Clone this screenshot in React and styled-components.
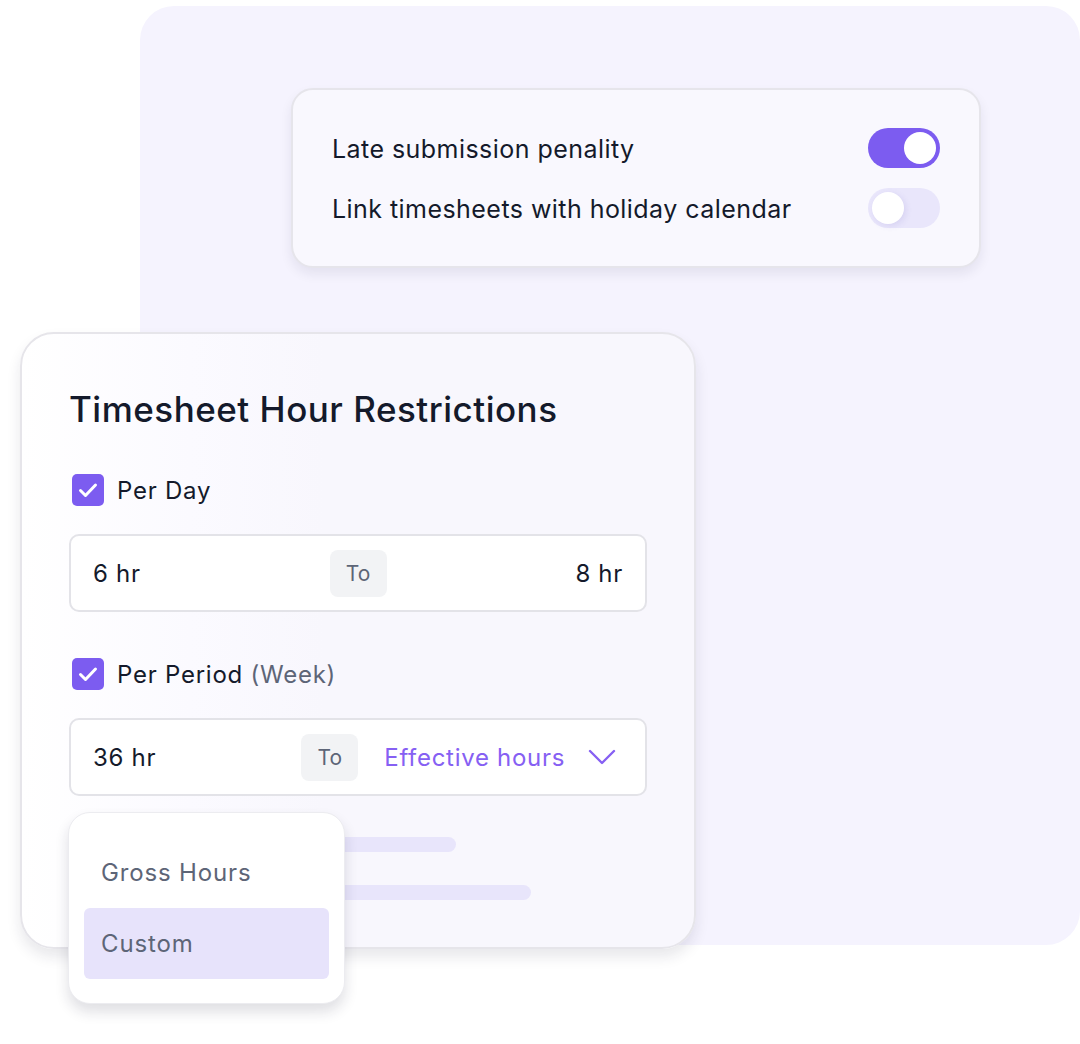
import React from 'react'
import styled, { createGlobalStyle } from 'styled-components'

let purple = '#7c5cf0'
let ink = '#141a2b'
let muted = '#5d6577'

let GlobalStyle = createGlobalStyle`
  html, body {
    margin: 0;
    padding: 0;
    background: #ffffff;
  }

  body {
    font-family: Inter, "Noto Sans", "Liberation Sans", sans-serif;
    color: ${ink};
  }
`

let Stage = styled.div`
  position: relative;
  width: 1080px;
  height: 1044px;
  overflow: hidden;
`

let Backdrop = styled.div`
  position: absolute;
  left: 140px;
  top: 6px;
  width: 940px;
  height: 939px;
  border-radius: 34px;
  background: #f5f3fe;
`

let SettingsCard = styled.div`
  position: absolute;
  left: 291px;
  top: 88px;
  width: 690px;
  box-sizing: border-box;
  padding: 38px 39px;
  display: flex;
  flex-direction: column;
  gap: 20px;
  border: 2px solid #e6e5eb;
  border-radius: 22px;
  background: #f9f8fe;
  box-shadow: 0 6px 12px rgba(30, 30, 60, 0.08);
`

let SettingRow = styled.div`
  display: flex;
  align-items: center;
  justify-content: space-between;
  height: 40px;
  font-size: 25px;
  letter-spacing: 0.45px;

  span {
    padding-top: 2px;
  }
`

let Toggle = styled.div`
  width: 72px;
  height: 40px;
  box-sizing: border-box;
  padding: 4px;
  border-radius: 20px;
  display: flex;
  justify-content: ${p => (p.on ? 'flex-end' : 'flex-start')};
  background: ${p => (p.on ? purple : '#e9e6fb')};

  &::after {
    content: '';
    width: 32px;
    height: 32px;
    border-radius: 50%;
    background: #ffffff;
    box-shadow: ${p => (p.on ? 'none' : '2px 2px 6px rgba(90, 70, 180, 0.12)')};
  }
`

let RestrictionCard = styled.div`
  position: absolute;
  left: 20px;
  top: 332px;
  width: 676px;
  height: 617px;
  box-sizing: border-box;
  padding: 55px 47px 0;
  display: flex;
  flex-direction: column;
  border: 2px solid #e6e5ea;
  border-radius: 34px;
  background: linear-gradient(90deg, #ffffff 0%, #fbfaff 25%, #f8f7fd 45%, #f8f7fd 100%);
  box-shadow: 0 8px 14px rgba(30, 30, 60, 0.1);
`

let Title = styled.h2`
  margin: 0;
  font-size: 35px;
  line-height: 40px;
  font-weight: 500;
  letter-spacing: 0.5px;
  color: ${ink};
`

let CheckRow = styled.label`
  display: flex;
  align-items: center;
  gap: 13px;
  height: 32px;
  margin-top: ${p => p.top}px;
  padding-left: 3px;
  font-size: 24px;
  letter-spacing: 0.75px;
`

let Box = styled.span`
  width: 32px;
  height: 32px;
  border-radius: 5px;
  background: ${purple};
  display: flex;
  align-items: center;
  justify-content: center;
`

let Hint = styled.span`
  color: ${muted};
`

let RangeField = styled.div`
  margin-top: 28px;
  height: 78px;
  box-sizing: border-box;
  border: 2px solid #e3e3e8;
  border-radius: 10px;
  background: #ffffff;
  padding: 0 22px;
  display: ${p => (p.centered ? 'grid' : 'flex')};
  grid-template-columns: 1fr auto 1fr;
  align-items: center;
  font-size: 24px;
`

let Value = styled.span`
  flex: 1;
  text-align: ${p => (p.right ? 'right' : 'left')};
  letter-spacing: 0.7px;
`

let ToChip = styled.span`
  width: 57px;
  height: 47px;
  border-radius: 8px;
  background: #f2f3f5;
  color: ${muted};
  font-size: 21px;
  display: flex;
  align-items: center;
  justify-content: center;
`

let Select = styled.span`
  display: flex;
  align-items: center;
  gap: 23px;
  margin-left: 26px;
  padding-right: 7px;
  color: #8660f3;
  letter-spacing: 0.7px;
`

let Bar = styled.div`
  width: ${p => p.w}px;
  height: 15px;
  border-radius: 8px;
  background: #e8e5fb;
  margin-top: ${p => p.top}px;
`

let Menu = styled.div`
  position: absolute;
  left: 68px;
  top: 812px;
  width: 277px;
  box-sizing: border-box;
  padding: 24px 15px;
  border: 1px solid #ececf0;
  border-radius: 22px;
  background: #ffffff;
  box-shadow: 0 8px 14px rgba(30, 30, 60, 0.14);
`

let MenuItem = styled.div`
  height: 71px;
  display: flex;
  align-items: center;
  padding-left: 17px;
  border-radius: 6px;
  font-size: 24px;
  color: ${muted};
  letter-spacing: 0.85px;
  background: ${p => (p.active ? '#e7e3fb' : 'transparent')};
`

let Check = () => (
  <svg width="20" height="16" viewBox="0 0 20 16" fill="none">
    <path d="M2.5 8.5l5 5 10-10.5" stroke="#fff" strokeWidth="3" strokeLinecap="round" strokeLinejoin="round" />
  </svg>
)

let Chevron = () => (
  <svg width="28" height="16" viewBox="0 0 28 16" fill="none">
    <path d="M2 2l12 12 12-12" stroke="#8660f3" strokeWidth="2.4" strokeLinecap="round" strokeLinejoin="round" />
  </svg>
)

let App = () => (
  <Stage>
    <GlobalStyle />
    <Backdrop />

    <SettingsCard>
      <SettingRow>
        <span>Late submission penality</span>
        <Toggle on />
      </SettingRow>
      <SettingRow>
        <span>Link timesheets with holiday calendar</span>
        <Toggle />
      </SettingRow>
    </SettingsCard>

    <RestrictionCard>
      <Title>Timesheet Hour Restrictions</Title>

      <CheckRow top={45}>
        <Box><Check /></Box>
        Per Day
      </CheckRow>
      <RangeField centered>
        <Value>6 hr</Value>
        <ToChip>To</ToChip>
        <Value right>8 hr</Value>
      </RangeField>

      <CheckRow top={46}>
        <Box><Check /></Box>
        <span>Per Period <Hint>(Week)</Hint></span>
      </CheckRow>
      <RangeField>
        <Value>36 hr</Value>
        <ToChip>To</ToChip>
        <Select>
          Effective hours
          <Chevron />
        </Select>
      </RangeField>

      <Bar w={387} top={41} />
      <Bar w={462} top={33} />
    </RestrictionCard>

    <Menu>
      <MenuItem>Gross Hours</MenuItem>
      <MenuItem active>Custom</MenuItem>
    </Menu>
  </Stage>
)

export default App
